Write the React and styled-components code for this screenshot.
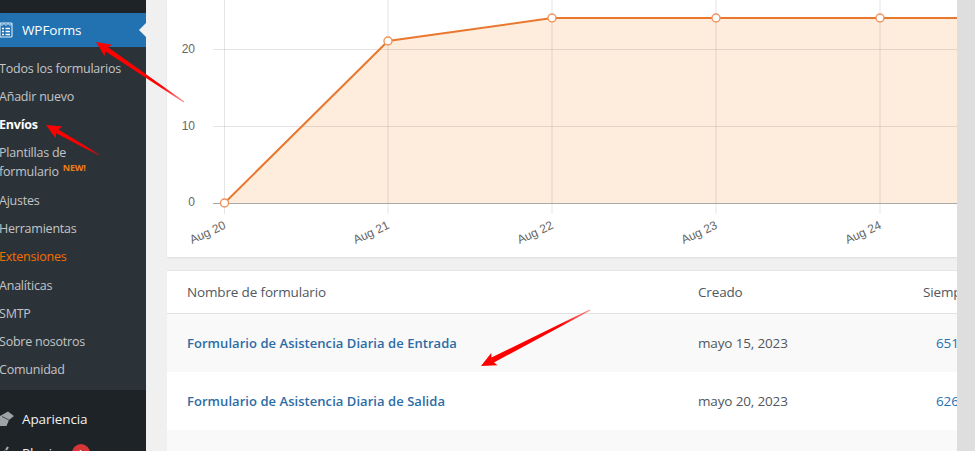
import React from "react";
import styled, { createGlobalStyle } from "styled-components";

const Global = createGlobalStyle`
  html, body { margin: 0; padding: 0; width: 975px; height: 451px; overflow: hidden; background: #f0f0f1; }
  * { box-sizing: border-box; }
`;
const Page = styled.div`
  position: relative; width: 975px; height: 451px; overflow: hidden; display: flex;
  font-family: "Open Sans", "Noto Sans", sans-serif; background: #f0f0f1;
`;
const Sidebar = styled.nav`
  width: 146px; flex: none; background: #1d2327; padding-top: 13px; display: flex; flex-direction: column;
`;
const ActiveItem = styled.div`
  position: relative; height: 34px; flex: none; background: #2271b1; color: #fff; display: flex; align-items: center;
  gap: 9px; font-size: 13.5px; letter-spacing: -0.1px;
  &::after { content: ""; position: absolute; right: 0; top: 10px; border: 7px solid transparent; border-right-color: #f0f0f1; border-left: 0; }
`;
const SubMenu = styled.ul`
  list-style: none; margin: 0; padding: 7px 0; height: 343px; flex: none; background: #2c3338; display: flex; flex-direction: column;
`;
const SubItem = styled.li`
  font-size: 12.5px; line-height: 19px; padding: 4.65px 0; letter-spacing: -0.22px; white-space: nowrap;
  margin-left: -1px;
  font-weight: ${p => (p.$bold ? 700 : 400)};
  color: ${p => (p.$bold ? "#fff" : p.$accent ? "#f56e00" : "#c3c4c7")};
`;
const NewTag = styled.sup`
  font-size: 9px; font-weight: 700; color: #ec7f14; line-height: 0; margin-left: 4px; letter-spacing: -0.2px;
  vertical-align: 5px;
`;
const MainItem = styled.div`
  height: 34px; flex: none; display: flex; align-items: center; gap: 8px; color: #f0f0f1; font-size: 13.5px; letter-spacing: -0.1px;
  padding-top: ${p => p.$pt || 0}px;
`;
const Badge = styled.span`
  width: 18px; height: 18px; border-radius: 50%; background: #d63638; color: #fff; font-size: 9px; display: inline-flex;
  align-items: center; justify-content: center; margin-left: -3px;
`;
const Main = styled.main`
  flex: none; width: 811px; padding-left: 21px; display: flex; flex-direction: column; gap: 13px;
`;
const ChartCard = styled.section`
  width: 790px; height: 257px; background: #fff; box-shadow: 0 1px 2px rgba(0,0,0,.08); flex: none;
  svg { display: block; }
`;
const TableCard = styled.section`
  width: 790px; background: #fff; border-top: 1px solid #e6e6e6; overflow: hidden; flex: 1;
`;
const Row = styled.div`
  display: grid; grid-template-columns: 511px 225px 60px; padding-left: 20px; align-items: center; white-space: nowrap;
  height: ${p => p.$h}px; background: ${p => p.$bg || "#fff"}; font-size: 13.5px; letter-spacing: -0.15px;
  color: #50575e; border-bottom: ${p => (p.$line ? "1px solid #e2e2e2" : "0")};
`;
const FormName = styled.a`
  color: #2c6ca5; font-weight: 600; font-size: 13px; letter-spacing: 0.05px;
`;
const Count = styled.a` color: #2271b1; padding-left: 13px; `;
const Gutter = styled.div` flex: 1; background: #dedede; `;
const Overlay = styled.svg` position: absolute; left: 0; top: 0; pointer-events: none; `;
const AxisText = styled.text`
  font-family: "Liberation Sans", Arial, sans-serif; font-size: 12px; fill: #666;
`;

const xs = [224.5, 388, 552, 716, 880];
const pts = [[224.5, 203], [388, 41], [552, 18], [716, 18], [880, 18], [957, 18]];
const line = pts.map(p => p.join(",")).join(" ");
const labels = ["Aug 20", "Aug 21", "Aug 22", "Aug 23", "Aug 24"];

const Chart = () => (
  <svg width="790" height="257" viewBox="167 0 790 257">
    <polygon points={`${line} 957,203 224.5,203`} fill="#feeddd" />
    {[49.5, 126.5].map(y => <line key={y} x1="213" x2="957" y1={y} y2={y} stroke="rgba(0,0,0,.1)" />)}
    {xs.map(x => <line key={x} x1={x} x2={x} y1="0" y2="214" stroke="rgba(0,0,0,.1)" />)}
    <line x1="213" x2="957" y1="203.5" y2="203.5" stroke="#aaa" />
    <polyline points={line} fill="none" stroke="#e9782f" strokeWidth="2" />
    {pts.slice(0, 5).map(([x, y]) => <circle key={x} cx={x} cy={y} r="4" fill="#fff" stroke="#f0935a" strokeWidth="1.4" />)}
    <AxisText x="195" y="52.5" textAnchor="end">20</AxisText>
    <AxisText x="195" y="129.5" textAnchor="end">10</AxisText>
    <AxisText x="195" y="206" textAnchor="end">0</AxisText>
    {labels.map((l, i) => (
      <AxisText key={l} x={xs[i] + 2} y="228" textAnchor="end" transform={`rotate(-25 ${xs[i] + 2} 228)`}>{l}</AxisText>
    ))}
  </svg>
);

const FormsIcon = () => (
  <svg width="14" height="16" viewBox="0 0 14 16" style={{ marginLeft: -1 }}>
    <rect x="1" y="1" width="12" height="14" rx="1" fill="none" stroke="#dff0fb" strokeWidth="1.1" />
    <path d="M1 1.5 3 3.5 5 1.5 7 3.5 9 1.5 11 3.5 13 1.5" fill="none" stroke="#dff0fb" />
    <path d="M3 6.5h2M6.5 6.5H11M3 9.5h2M6.5 9.5H11M3 12.5h2M6.5 12.5H11" stroke="#fff" strokeWidth="1.3" />
  </svg>
);
const BrushIcon = () => (
  <svg width="14" height="16" viewBox="0 0 14 16">
    <path d="M0 5 8 0.5 14 5 9 9 6.5 15 3 15 0 15Z" fill="#9ea3a8" />
    <path d="M2 5.5 9 9" stroke="#1d2327" strokeWidth=".7" />
  </svg>
);
const PlugIcon = () => (
  <svg width="14" height="14" viewBox="0 0 14 14">
    <path d="M2 12 6 8M8 1l-2 3M13 6l-3 2M4 5l5 5" stroke="#a7aaad" strokeWidth="2.2" fill="none" />
  </svg>
);
const Arrow = ({ tail, head, w }) => {
  const [tx, ty] = tail, [hx, hy] = head;
  const d = Math.hypot(hx - tx, hy - ty), ux = (hx - tx) / d, uy = (hy - ty) / d;
  const nx = -uy, ny = ux, L = 15, W = 6.8;
  const bx = hx - ux * L, by = hy - uy * L;
  const cx = hx - ux * (L - 3), cy = hy - uy * (L - 3);
  const id = `g${tx}`;
  return (
    <>
      <defs>
        <linearGradient id={id} gradientUnits="userSpaceOnUse" x1={tx} y1={ty} x2={bx} y2={by}>
          <stop offset="0" stopColor="#ff0000" stopOpacity=".4" />
          <stop offset=".3" stopColor="#ff0000" />
        </linearGradient>
      </defs>
      <polygon
        fill={`url(#${id})`}
        points={`${tx + nx * 0.7},${ty + ny * 0.7} ${cx + nx * w},${cy + ny * w} ${cx - nx * w},${cy - ny * w} ${tx - nx * 0.7},${ty - ny * 0.7}`}
      />
      <polygon fill="#ff0000" points={`${hx},${hy} ${bx + nx * W},${by + ny * W} ${cx},${cy} ${bx - nx * W},${by - ny * W}`} />
    </>
  );
};

export default function App() {
  return (
    <Page>
      <Global />
      <Sidebar>
        <ActiveItem><FormsIcon />WPForms</ActiveItem>
        <SubMenu>
          <SubItem>Todos los formularios</SubItem>
          <SubItem>Añadir nuevo</SubItem>
          <SubItem $bold>Envíos</SubItem>
          <SubItem>Plantillas de<br />formulario<NewTag>NEW!</NewTag></SubItem>
          <SubItem>Ajustes</SubItem>
          <SubItem>Herramientas</SubItem>
          <SubItem $accent>Extensiones</SubItem>
          <SubItem>Analíticas</SubItem>
          <SubItem>SMTP</SubItem>
          <SubItem>Sobre nosotros</SubItem>
          <SubItem>Comunidad</SubItem>
        </SubMenu>
        <MainItem $pt={24}><BrushIcon />Apariencia</MainItem>
        <MainItem $pt={24}><PlugIcon />Plugins<Badge>1</Badge></MainItem>
      </Sidebar>
      <Main>
        <ChartCard><Chart /></ChartCard>
        <TableCard>
          <Row $h={43} $line><span>Nombre de formulario</span><span>Creado</span><span>Siempre</span></Row>
          <Row $h={58} $bg="#f9f9f9"><FormName>Formulario de Asistencia Diaria de Entrada</FormName><span>mayo 15, 2023</span><Count>6519</Count></Row>
          <Row $h={58}><FormName>Formulario de Asistencia Diaria de Salida</FormName><span>mayo 20, 2023</span><Count>6264</Count></Row>
          <Row $h={30} $bg="#f9f9f9" />
        </TableCard>
      </Main>
      <Gutter />
      <Overlay width="975" height="451" viewBox="0 0 975 451">
        <Arrow tail={[184, 102]} head={[96, 42]} w={2.5} />
        <Arrow tail={[99, 155]} head={[46, 125]} w={2.2} />
        <Arrow tail={[590, 310]} head={[481, 366]} w={2.8} />
      </Overlay>
    </Page>
  );
}
